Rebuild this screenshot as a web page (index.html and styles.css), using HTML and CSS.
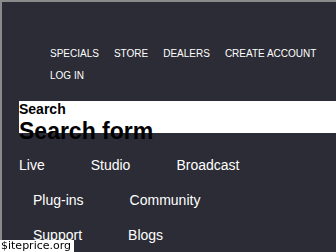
FILE: index.html
```html
<!DOCTYPE html>
<html lang="en">
<head>
<meta charset="UTF-8" />
<meta name="viewport" content="width=device-width, initial-scale=1.0"/>
<title>Home</title>
<link rel="stylesheet" href="styles.css">
</head>
<body>
<header>
    <ul class="top-links">
        <li><a href="#">SPECIALS</a></li>
        <li><a href="#">STORE</a></li>
        <li><a href="#">DEALERS</a></li>
        <li><a href="#">CREATE ACCOUNT</a></li>
        <li><a href="#">LOG IN</a></li>
    </ul>
</header>
<main>
    <div class="search-box">
        <h2 class="search-label">Search</h2>
        <h2 class="search-title">Search form</h2>
    </div>
    <nav class="main-menu">
        <div class="menu-row">
            <a href="#">Live</a>
            <a href="#">Studio</a>
            <a href="#">Broadcast</a>
        </div>
        <div class="menu-row indent">
            <a href="#">Plug-ins</a>
            <a href="#">Community</a>
        </div>
        <div class="menu-row indent">
            <a href="#">Support</a>
            <a href="#">Blogs</a>
        </div>
    </nav>
</main>
<div class="watermark">$iteprice.org</div>
</body>
</html>
```
FILE: styles.css
```css
html, body {
    height: 100%;
}
body {
    margin: 0;
    box-sizing: border-box;
    font-family: "Liberation Sans", Arial, sans-serif;
    background: #2b2c35;
    border-top: 2px solid #8a8a8c;
    border-left: 2px solid #8a8a8c;
    color: #fff;
    overflow: hidden;
}
a {
    color: #fff;
    text-decoration: none;
}
header {
    padding: 41px 0 0 48px;
}
.top-links {
    list-style: none;
    margin: 0;
    padding: 0;
    display: flex;
    flex-wrap: wrap;
    column-gap: 15px;
    font-size: 10px;
    line-height: 22px;
}
.search-box {
    margin: 14px 0 0 17px;
    height: 32px;
    background: #fff;
    color: #000;
}
.search-box h2 {
    margin: 0;
    font-weight: bold;
    white-space: nowrap;
}
.search-label {
    font-size: 14px;
    line-height: 16px;
}
.search-title {
    margin-top: 3px !important;
    font-size: 23px;
    line-height: 23px;
}
.main-menu {
    margin-top: 15px;
    padding-left: 17px;
    font-size: 14px;
    line-height: 35px;
}
.menu-row {
    display: flex;
    gap: 46px;
}
.menu-row.indent {
    padding-left: 14px;
}
.watermark {
    position: fixed;
    left: 0;
    bottom: 0;
    background: #fff;
    color: #000;
    font-family: "DejaVu Sans", sans-serif;
    font-size: 11px;
    line-height: 12px;
    padding: 0 3px 0 1px;
}
```
